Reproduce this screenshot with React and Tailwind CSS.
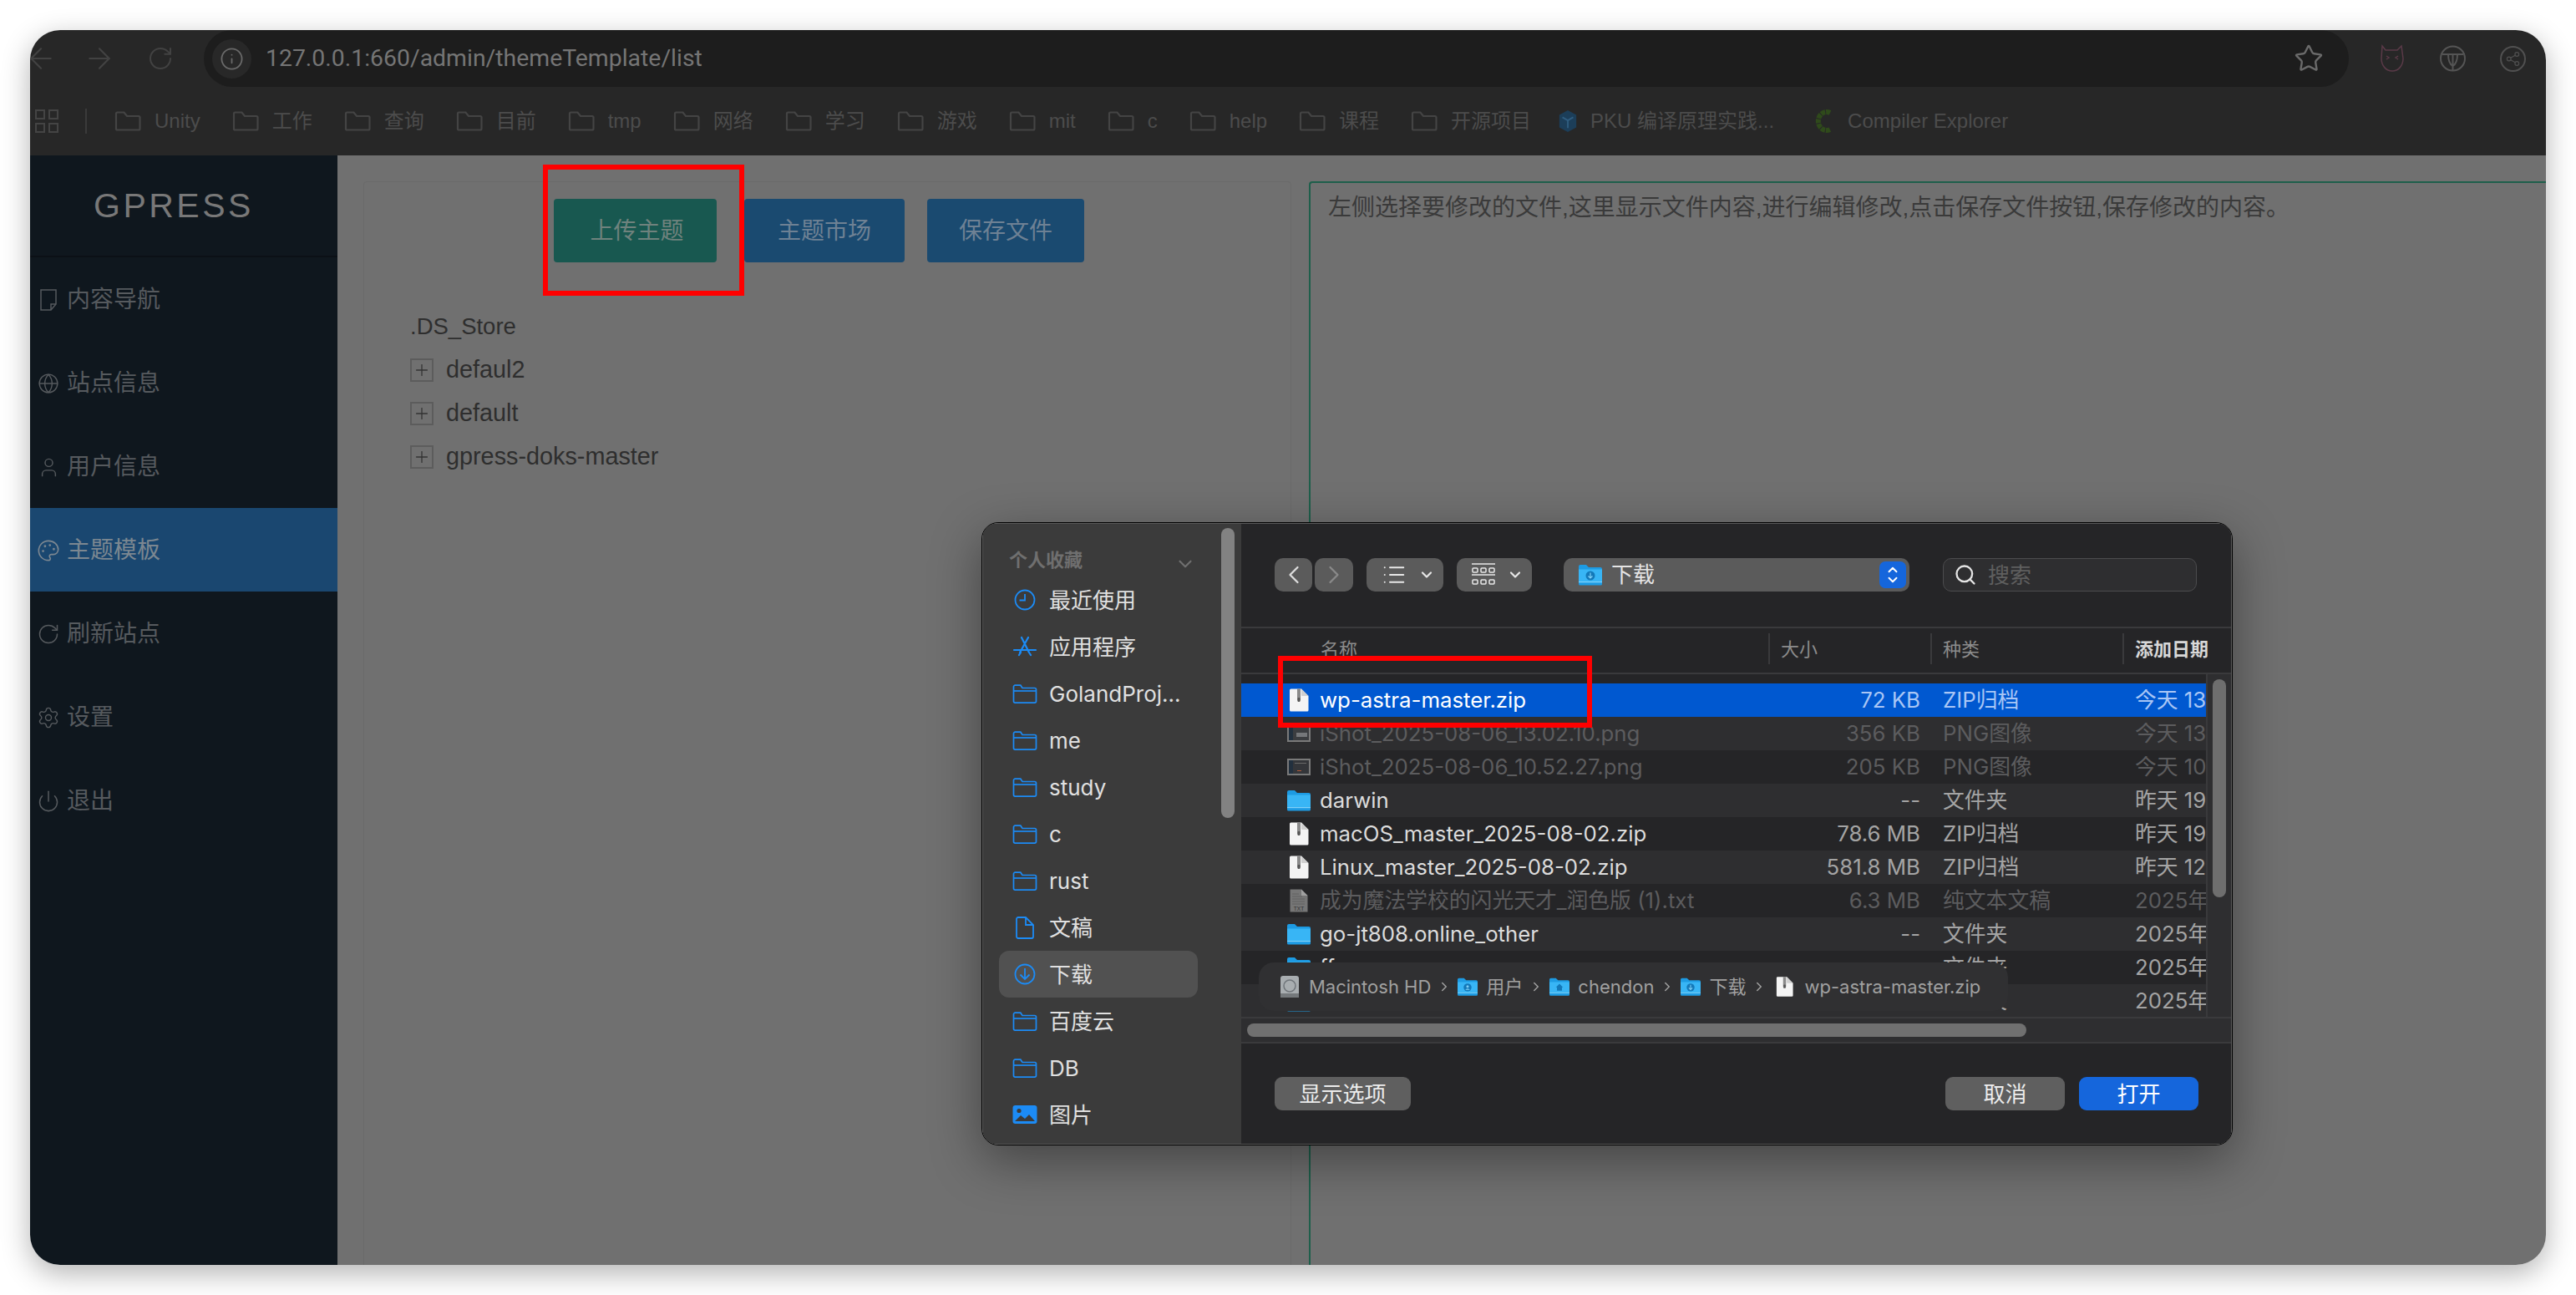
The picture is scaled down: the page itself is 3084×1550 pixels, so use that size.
import {
  ArrowLeft,
  ArrowRight,
  RotateCw,
  Info,
  Star,
  Share2,
  Globe,
  User,
  Palette,
  Settings,
  Power,
  Plus,
  Search,
  ChevronLeft,
  ChevronRight,
  ChevronDown,
  ChevronUp,
  List,
} from "lucide-react";

const PAGE_FONT = "font-['Liberation_Sans','Noto_Sans_CJK_SC',sans-serif]";

const BookmarkFolder = () => (
  <svg width="32" height="24" viewBox="0 0 32 24" fill="none" stroke="#444444" strokeWidth="2.2" className="shrink-0">
    <path d="M2 22V3a1.5 1.5 0 0 1 1.5-1.5h8L15 6h14a1.5 1.5 0 0 1 1.5 1.5V21a1.5 1.5 0 0 1-1.5 1.5H3.5A1.5 1.5 0 0 1 2 21z" />
  </svg>
);

const SideFolder = () => (
  <svg width="30" height="23" viewBox="0 0 30 23" fill="none" stroke="#1c8bf5" strokeWidth="1.7">
    <path d="M1.5 4.5V3a1.8 1.8 0 0 1 1.8-1.8h6.5L12 4.5h14.7a1.8 1.8 0 0 1 1.8 1.8v14a1.8 1.8 0 0 1-1.8 1.8H3.3a1.8 1.8 0 0 1-1.8-1.8z" />
    <path d="M1.5 8h27" />
  </svg>
);

const sideIcons = {
  clock: (
    <svg width="28" height="26" viewBox="0 0 28 26" fill="none" stroke="#1c8bf5" strokeWidth="1.8">
      <circle cx="14" cy="13" r="11.5" />
      <path d="M14 6v7.5H7.5" />
    </svg>
  ),
  apps: (
    <svg width="30" height="26" viewBox="0 0 30 26" fill="none" stroke="#1c8bf5" strokeWidth="2.2" strokeLinecap="round">
      <path d="M11 2l9 18M19 2L9 20M2 17h26M8 23l2-3M22 23l-2-3" />
    </svg>
  ),
  folder: <SideFolder />,
  doc: (
    <svg width="24" height="27" viewBox="0 0 24 27" fill="none" stroke="#1c8bf5" strokeWidth="1.8">
      <path d="M2 3a2 2 0 0 1 2-2h9l9 9v14a2 2 0 0 1-2 2H4a2 2 0 0 1-2-2z" />
      <path d="M13 1v9h9" />
    </svg>
  ),
  download: (
    <svg width="28" height="26" viewBox="0 0 28 26" fill="none" stroke="#1c8bf5" strokeWidth="1.8">
      <circle cx="14" cy="13" r="11.5" />
      <path d="M14 6v13M8.5 13.5l5.5 5.5 5.5-5.5" />
    </svg>
  ),
  picture: (
    <svg width="30" height="24" viewBox="0 0 30 24">
      <rect x="0.5" y="1" width="29" height="22" rx="3" fill="#1c8bf5" />
      <circle cx="8" cy="7.5" r="2.6" fill="#3b3b3b" />
      <path d="M3 20l7-7 5 4 5-5 7 8z" fill="#3b3b3b" />
    </svg>
  ),
};

const ZipIcon = ({ small }) => (
  <svg width={small ? 21 : 24} height={small ? 26 : 28} viewBox="0 0 24 28">
    <path d="M1 2a1.5 1.5 0 0 1 1.5-1.5H15L23.5 9v17a1.5 1.5 0 0 1-1.5 1.5H2.500A1.500 1.500 0 0 1 1 26z" fill="#f4f4f4" />
    <path d="M15 0.500L23.500 9H16a1 1 0 0 1-1-1z" fill="#cfcfcf" />
    <rect x="10" y="0.500" width="4" height="14" fill="#8a8a8a" />
    <rect x="10.500" y="11" width="3" height="5" rx="1" fill="#555555" />
  </svg>
);

const FolderIcon = ({ w = 28, h = 26, glyph }) => (
  <svg width={w} height={h} viewBox="0 0 28 26">
    <path d="M0 3a2 2 0 0 1 2-2h7l3 3h14a2 2 0 0 1 2 2v18a1.500 1.500 0 0 1-1.500 1.500h-25A1.500 1.500 0 0 1 0 24z" fill="#1d9be3" />
    <path d="M0 6.500h28V21H0z" fill="#38b5f5" />
    <path d="M0 21h28v1.200H0z" fill="#7fd0f7" />
    {glyph === "down" && (
      <g>
        <circle cx="14" cy="14" r="5.500" fill="#1378b8" />
        <path d="M14 10.500v6M11.500 14.500l2.500 2.500 2.500-2.500" stroke="#7fd0f7" strokeWidth="1.200" fill="none" />
      </g>
    )}
    {glyph === "user" && (
      <g fill="#1378b8">
        <circle cx="14" cy="14" r="5.500" />
        <circle cx="14" cy="12.800" r="1.800" fill="#7fd0f7" />
        <path d="M10.800 17.500a3.500 3 0 0 1 6.400 0z" fill="#7fd0f7" />
      </g>
    )}
    {glyph === "home" && <path d="M14 9l5 5h-1.500v4.500h-7V14H9z" fill="#1378b8" />}
  </svg>
);

const ShotIcon = ({ variant }) => (
  <svg width="28" height="20" viewBox="0 0 28 20">
    <rect width="28" height="20" fill="#7a7a7a" />
    <rect x="2" y="2" width="24" height="16" fill={variant === 1 ? "#3b3d40" : "#34363a"} />
    <rect x="2" y="2" width="5" height="16" fill="#22303e" />
    {variant === 1 ? (
      <rect x="11" y="9" width="13" height="5" fill="#75777a" />
    ) : (
      <g>
        <rect x="9" y="5" width="14" height="1" fill="#6a6a6a" />
        <rect x="12" y="14" width="5" height="1" fill="#b05a3a" />
      </g>
    )}
  </svg>
);

const TxtIcon = () => (
  <svg width="22" height="28" viewBox="0 0 22 28">
    <path d="M0.500 0.500H14L21.500 8V27.500H0.500z" fill="#767676" />
    <path d="M14 0.500L21.500 8H14z" fill="#a0a0a0" />
    <path d="M3 6h8M3 9h12M3 12h15M3 15h15M3 18h15" stroke="#606060" strokeWidth="1" />
    <text x="11" y="25.500" textAnchor="middle" fontSize="6.500" fill="#2f2f2f" fontFamily="Liberation Sans">TXT</text>
  </svg>
);

const bookmarks = ["Unity", "工作", "查询", "目前", "tmp", "网络", "学习", "游戏", "mit", "c", "help", "课程", "开源项目"];

const navItems = [
  {
    label: "内容导航",
    icon: (
      <svg width="24" height="30" viewBox="0 0 24 30" fill="none" stroke="currentColor" strokeWidth="1.500">
        <path d="M3 3h18v17l-6 7H3z" />
        <path d="M21 20h-6v7" />
      </svg>
    ),
  },
  { label: "站点信息", icon: <Globe size={26} strokeWidth={1.3} /> },
  { label: "用户信息", icon: <User size={27} strokeWidth={1.3} /> },
  { label: "主题模板", icon: <Palette size={28} strokeWidth={1.4} />, active: true },
  { label: "刷新站点", icon: <RotateCw size={28} strokeWidth={1.3} /> },
  { label: "设置", icon: <Settings size={28} strokeWidth={1.2} /> },
  { label: "退出", icon: <Power size={28} strokeWidth={1.3} /> },
];

const favorites = [
  { label: "最近使用", icon: "clock" },
  { label: "应用程序", icon: "apps" },
  { label: "GolandProj...", icon: "folder" },
  { label: "me", icon: "folder" },
  { label: "study", icon: "folder" },
  { label: "c", icon: "folder" },
  { label: "rust", icon: "folder" },
  { label: "文稿", icon: "doc" },
  { label: "下载", icon: "download", active: true },
  { label: "百度云", icon: "folder" },
  { label: "DB", icon: "folder" },
  { label: "图片", icon: "picture" },
];

const files = [
  { name: "wp-astra-master.zip", size: "72 KB", kind: "ZIP归档", date: "今天 13:02", icon: <ZipIcon />, selected: true },
  { name: "iShot_2025-08-06_13.02.10.png", size: "356 KB", kind: "PNG图像", date: "今天 13:02", icon: <ShotIcon variant={1} />, dim: true },
  { name: "iShot_2025-08-06_10.52.27.png", size: "205 KB", kind: "PNG图像", date: "今天 10:52", icon: <ShotIcon variant={2} />, dim: true },
  { name: "darwin", size: "--", kind: "文件夹", date: "昨天 19:20", icon: <FolderIcon /> },
  { name: "macOS_master_2025-08-02.zip", size: "78.6 MB", kind: "ZIP归档", date: "昨天 19:11", icon: <ZipIcon /> },
  { name: "Linux_master_2025-08-02.zip", size: "581.8 MB", kind: "ZIP归档", date: "昨天 12:40", icon: <ZipIcon /> },
  { name: "成为魔法学校的闪光天才_润色版 (1).txt", size: "6.3 MB", kind: "纯文本文稿", date: "2025年8月1日", icon: <TxtIcon />, dim: true },
  { name: "go-jt808.online_other", size: "--", kind: "文件夹", date: "2025年7月30日", icon: <FolderIcon /> },
  { name: "ff", size: "--", kind: "文件夹", date: "2025年7月28日", icon: <FolderIcon /> },
  { name: "数据库", size: "--", kind: "文件夹", date: "2025年7月26日", icon: <FolderIcon /> },
];

const TopBar = () => (
  <div className="flex h-[68px] items-center bg-[#272727] text-[#424242]">
    <ArrowLeft size={40} strokeWidth={1.3} className="ml-[-7px] shrink-0" />
    <ArrowRight size={40} strokeWidth={1.3} className="ml-[30px] shrink-0" />
    <RotateCw size={32} strokeWidth={1.5} className="ml-[37px] shrink-0" />
    <div className="ml-[36px] flex h-[68px] w-[2568px] items-center rounded-full bg-[#1d1d1d] pl-[10px] pr-[30px]">
      <div className="flex h-[47px] w-[47px] items-center justify-center rounded-full bg-[#282828] text-[#6a6a6a]">
        <Info size={29} strokeWidth={1.5} />
      </div>
      <span className="ml-[17px] font-['Roboto',sans-serif] text-[28.4px] text-[#757575]">127.0.0.1:660/admin/themeTemplate/list</span>
      <Star size={36} strokeWidth={1.6} className="ml-auto text-[#6a6a6a]" />
    </div>
    <svg width="30" height="34" viewBox="0 0 30 34" fill="none" stroke="#5a3a48" strokeWidth="1.500" className="ml-[37px] shrink-0">
      <path d="M3 2l4 5h14l5-5 2 15c0 9-6 15-13 15S2 26 2 17z" />
      <path d="M8 14l3 2-3 2M22 14l-3 2 3 2" />
    </svg>
    <svg width="31" height="32" viewBox="0 0 31 32" fill="none" stroke="#555555" strokeWidth="2" className="ml-[42px] shrink-0">
      <circle cx="15.500" cy="16" r="14.500" />
      <path d="M3 11h25M15.500 11v20M10 11c0 8 2 12 5.500 14M21 11c0 8-2 12-5.500 14" />
    </svg>
    <div className="relative ml-[41px] flex h-[31px] w-[31px] shrink-0 items-center justify-center rounded-full border-2 border-[#505050] text-[#505050]">
      <Share2 size={19} strokeWidth={1.5} />
    </div>
  </div>
);

const BookmarkBar = () => (
  <div className="flex h-[82px] items-center bg-[#272727] pl-[6px] text-[24px] text-[#4c4c4c]">
    <div className="grid grid-cols-2 gap-[4px]">
      {[0, 1, 2, 3].map((i) => (
        <div key={i} className="h-[12px] w-[12px] border-2 border-[#444444]" />
      ))}
    </div>
    <div className="ml-[32px] mr-[33px] h-[30px] w-[2px] bg-[#3a3a3a]" />
    <div className="flex items-center gap-[38px]">
      {bookmarks.map((b) => (
        <div key={b} className="flex items-center gap-[16px]">
          <BookmarkFolder />
          <span>{b}</span>
        </div>
      ))}
      <div className="ml-[-6px] flex items-center gap-[15px]">
        <svg width="24" height="30" viewBox="0 0 26 30" className="shrink-0">
          <path d="M13 1l11 6v16l-11 6-11-6V7z" fill="#1c3e59" />
          <path d="M6 10l7 4 7-4M13 14v10" stroke="#2f5d80" strokeWidth="2" fill="none" />
        </svg>
        <span>PKU 编译原理实践...</span>
      </div>
      <div className="ml-[9px] flex items-center gap-[17px]">
        <svg width="24" height="32" viewBox="0 0 24 32" fill="none" className="shrink-0">
          <path d="M20 6a10 11 0 1 0 0 20" stroke="#2f4a1b" strokeWidth="6" strokeDasharray="5 1" />
        </svg>
        <span>Compiler Explorer</span>
      </div>
    </div>
  </div>
);

const Sidebar = () => (
  <div className="w-[368px] shrink-0 bg-[#0f171e]">
    <div className="flex h-[122px] items-center border-b-2 border-[#0b1016] pl-[76px] pt-[1px] text-[41px] tracking-[3.500px] text-[#787878]">GPRESS</div>
    {navItems.map((item) => (
      <div
        key={item.label}
        className={
          item.active
            ? "flex h-[100px] items-center gap-[8px] bg-[#1a4770] pl-[8px] pt-[2px] text-[28px] text-[#7c8791]"
            : "flex h-[100px] items-center gap-[8px] pl-[8px] pt-[2px] text-[28px] text-[#565a5e]"
        }
      >
        <div className="flex w-[28px] justify-center">{item.icon}</div>
        <span>{item.label}</span>
      </div>
    ))}
  </div>
);

const MainArea = () => (
  <div className="flex min-w-0 flex-1 bg-[#707070] pl-[31px] pt-[31px]">
    <div className="h-[1400px] w-[1111px] shrink-0 rounded-[4px] border border-[#6a6a6a]">
      <div className="ml-[227px] mt-[20px] flex text-[28px]">
        <button className="h-[76px] w-[195px] rounded-[4px] bg-[#185850] pl-[4px] pt-[2px] text-[#6f827d]">上传主题</button>
        <button className="ml-[33px] h-[76px] w-[192px] rounded-[4px] bg-[#1a4a70] pt-[2px] text-[#6e8194]">主题市场</button>
        <button className="ml-[27px] h-[76px] w-[188px] rounded-[4px] bg-[#1a4a70] pt-[2px] text-[#6e8194]">保存文件</button>
      </div>
      <div className="ml-[55px] mt-[51px] text-[28.800px] text-[#2e2e2e]">
        <div className="flex h-[52px] items-center text-[27.500px]">.DS_Store</div>
        {["defaul2", "default", "gpress-doks-master"].map((dir) => (
          <div key={dir} className="flex h-[52px] items-center">
            <div className="flex h-[28px] w-[28px] items-center justify-center border-2 border-[#5c5c5c] text-[#333333]">
              <Plus size={22} strokeWidth={1.4} />
            </div>
            <span className="ml-[15px]">{dir}</span>
          </div>
        ))}
      </div>
    </div>
    <div className="ml-[21px] flex-1 rounded-tl-[4px] border-l-2 border-t-2 border-[#1e5f4b] pl-[21px] pt-[12px] text-[28px] leading-[36px] text-[#3a3a3a]">
      左侧选择要修改的文件,这里显示文件内容,进行编辑修改,点击保存文件按钮,保存修改的内容。
    </div>
  </div>
);

const ToolButton = ({ className, children }) => (
  <div className={`flex h-[40px] items-center rounded-[10px] bg-[#5b5b5b] ${className}`}>{children}</div>
);

const DialogSidebar = () => (
  <div className="relative w-[309px] shrink-0 bg-[#3b3b3b] text-[26px] text-[#e0e0e0]">
    <div className="flex h-[63px] items-end justify-between pb-[3px] pl-[31px] pr-[54px] text-[22px] font-bold text-[#6f6f6f]">
      <span>个人收藏</span>
      <ChevronDown size={26} strokeWidth={2} className="mb-[-1px] text-[#6f6f6f]" />
    </div>
    {favorites.map((f) => (
      <div
        key={f.label}
        className={
          f.active
            ? "ml-[19px] mr-[52px] flex h-[56px] items-center gap-[11px] rounded-[12px] bg-[#515151] pl-[13px]"
            : "ml-[19px] mr-[52px] flex h-[56px] items-center gap-[11px] pl-[13px]"
        }
      >
        <div className="flex w-[36px] justify-center">{sideIcons[f.icon]}</div>
        <span className="whitespace-nowrap">{f.label}</span>
      </div>
    ))}
    <div className="absolute right-[8px] top-[5px] h-[347px] w-[16px] rounded-full bg-[#828282]" />
  </div>
);

const FileRow = ({ file, index }) => {
  let rowBg = index % 2 === 1 ? "bg-[#2e2e30]" : "bg-[#252527]";
  let nameColor = "text-[#dcdcdc]";
  let metaColor = "text-[#a4a4a4]";
  if (file.dim) {
    nameColor = "text-[#5c5c5e]";
    metaColor = "text-[#5c5c5e]";
  }
  if (file.selected) {
    rowBg = "bg-[#0058d0]";
    nameColor = "text-white";
    metaColor = "text-[#a9c6f5]";
  }
  return (
    <div className={`flex h-[40px] items-center whitespace-nowrap ${rowBg}`}>
      <div className="flex w-[813px] items-center pl-[54px]">
        <div className="flex w-[30px] justify-center">{file.icon}</div>
        <span className={`ml-[10px] ${nameColor}`}>{file.name}</span>
        <span className={`ml-auto ${metaColor}`}>{file.size}</span>
      </div>
      <div className={`w-[257px] pl-[27px] ${metaColor}`}>{file.kind}</div>
      <div className={`w-[87px] overflow-hidden ${metaColor}`}>{file.date}</div>
    </div>
  );
};

const FilePane = () => (
  <div className="relative flex min-w-0 flex-1 flex-col bg-[#252527]">
    <div className="flex h-[125px] shrink-0 items-start border-b-2 border-[#3a3a3c] pl-[40px] pt-[41px]">
      <ToolButton className="w-[45px] justify-center text-[#dedede]"><ChevronLeft size={36} strokeWidth={1.5} /></ToolButton>
      <ToolButton className="ml-[3px] w-[46px] justify-center text-[#8a8a8a]"><ChevronRight size={36} strokeWidth={1.5} /></ToolButton>
      <ToolButton className="ml-[16px] w-[92px] justify-between pl-[18px] pr-[10px] text-[#e8e8e8]">
        <List size={30} strokeWidth={1.6} />
        <ChevronDown size={20} strokeWidth={2.6} />
      </ToolButton>
      <ToolButton className="ml-[16px] w-[90px] justify-between pl-[17px] pr-[10px] text-[#e8e8e8]">
        <svg width="30" height="28" viewBox="0 0 30 28" fill="none" stroke="currentColor" strokeWidth="1.500">
          <path d="M1 1h28M1 14h28" />
          <rect x="2" y="6" width="6" height="5" rx="1" />
          <rect x="12" y="6" width="6" height="5" rx="1" />
          <rect x="22" y="6" width="6" height="5" rx="1" />
          <rect x="2" y="20" width="6" height="5" rx="1" />
          <rect x="12" y="20" width="6" height="5" rx="1" />
          <rect x="22" y="20" width="6" height="5" rx="1" />
        </svg>
        <ChevronDown size={20} strokeWidth={2.6} />
      </ToolButton>
      <ToolButton className="ml-[38px] w-[414px] pl-[18px] text-[26px] text-[#e4e4e4]">
        <FolderIcon glyph="down" />
        <span className="ml-[11px] mt-[-2px]">下载</span>
        <div className="ml-auto mr-[4px] flex h-[32px] w-[32px] flex-col items-center justify-center rounded-[7px] bg-[#1566dc] text-white">
          <ChevronUp size={18} strokeWidth={2.6} className="mb-[-3px]" />
          <ChevronDown size={18} strokeWidth={2.6} className="mt-[-3px]" />
        </div>
      </ToolButton>
      <div className="ml-[40px] flex h-[40px] w-[304px] items-center rounded-[10px] border border-[#4c4c4e] bg-[#2e2e30] pl-[12px] text-[26px] text-[#5f5f5f]">
        <Search size={28} strokeWidth={2} className="text-[#e4e4e4]" />
        <span className="ml-[13px]">搜索</span>
      </div>
    </div>
    <div className="relative h-[465px] shrink-0 overflow-hidden text-[25.800px] leading-none">
      <div className="flex h-[55px] items-center border-b-2 border-[#3a3a3c] pb-[4px] text-[22px] text-[#8c8c8c]">
        <div className="flex w-[631px] pl-[95px]">名称</div>
        <div className="flex h-[37px] w-[194px] items-center border-l-2 border-[#3a3a3c] pl-[13px]">大小</div>
        <div className="flex h-[37px] w-[230px] items-center border-l-2 border-[#3a3a3c] pl-[13px]">种类</div>
        <div className="flex h-[37px] items-center border-l-2 border-[#3a3a3c] pl-[13px] font-bold text-[#d8d8d8]">添加日期</div>
      </div>
      <div className="h-[11px]" />
      <div className="flex">
        <div className="w-[1157px] shrink-0">
          {files.map((file, i) => (
            <FileRow key={file.name} file={file} index={i} />
          ))}
        </div>
      </div>
      <div className="absolute bottom-0 right-0 top-[55px] w-[30px] border-l-2 border-[#3a3a3c] bg-[#2e2e30]">
        <div className="ml-[6px] mt-[6px] h-[261px] w-[16px] rounded-full bg-[#6e6e6e]" />
      </div>
    </div>
    <div className="flex h-[32px] shrink-0 items-center border-y-2 border-[#3a3a3c] bg-[#2e2e30] pl-[7px]">
      <div className="h-[16px] w-[933px] rounded-full bg-[#707070]" />
    </div>
    <div className="flex flex-1 items-start justify-between pl-[40px] pr-[39px] pt-[40px] text-[26px] text-[#ececec]">
      <button className="h-[40px] w-[163px] rounded-[9px] bg-[#5f5f5f]">显示选项</button>
      <div className="flex gap-[17px]">
        <button className="h-[40px] w-[143px] rounded-[9px] bg-[#5f5f5f]">取消</button>
        <button className="h-[40px] w-[143px] rounded-[9px] bg-[#1566dc] text-white">打开</button>
      </div>
    </div>
    {/* path tooltip sits over the list */}
    <div className="absolute left-[21px] top-[525px] flex h-[58px] w-[897px] items-center rounded-[18px] bg-[#303032] pl-[25px] text-[22px] whitespace-nowrap text-[#a0a0a0]">
      <svg width="24" height="28" viewBox="0 0 24 28" className="shrink-0">
        <rect x="1" y="1" width="22" height="26" rx="3" fill="#a8adb0" />
        <rect x="1" y="22" width="22" height="5" fill="#75797c" />
        <circle cx="12" cy="13" r="7" fill="none" stroke="#70757a" strokeWidth="1.500" />
      </svg>
      <span className="ml-[11px]">Macintosh HD</span>
      <ChevronRight size={18} strokeWidth={2} className="ml-[7px]" />
      <div className="ml-[7px]"><FolderIcon w={24} h={26} glyph="user" /></div>
      <span className="ml-[10px]">用户</span>
      <ChevronRight size={18} strokeWidth={2} className="ml-[7px]" />
      <div className="ml-[7px]"><FolderIcon w={24} h={26} glyph="home" /></div>
      <span className="ml-[10px]">chendon</span>
      <ChevronRight size={18} strokeWidth={2} className="ml-[7px]" />
      <div className="ml-[7px]"><FolderIcon w={24} h={26} glyph="down" /></div>
      <span className="ml-[10px]">下载</span>
      <ChevronRight size={18} strokeWidth={2} className="ml-[7px]" />
      <div className="ml-[11px]"><ZipIcon small /></div>
      <span className="ml-[13px]">wp-astra-master.zip</span>
    </div>
  </div>
);

export default function App() {
  return (
    <div className={`relative h-[1550px] w-[3084px] overflow-hidden bg-white p-[36px] ${PAGE_FONT}`}>
      <div className="flex h-[1478px] w-[3012px] flex-col overflow-hidden rounded-[36px] shadow-[0_10px_34px_rgba(0,0,0,0.3)]">
        <TopBar />
        <BookmarkBar />
        <div className="flex min-h-0 flex-1">
          <Sidebar />
          <MainArea />
        </div>
      </div>

      {/* file picker */}
      <div className="absolute left-[1175px] top-[625px] h-[746px] w-[1498px] overflow-hidden rounded-[20px] border border-black font-['Inter','Noto_Sans_CJK_SC',sans-serif] shadow-[0_18px_60px_rgba(0,0,0,0.4)]">
        <div className="flex h-full rounded-[19px] border border-[#5a5a5a]">
          <DialogSidebar />
          <FilePane />
        </div>
      </div>

      {/* annotation boxes */}
      <div className="absolute left-[650px] top-[197px] h-[157px] w-[241px] border-[6px] border-[#ff0000]" />
      <div className="absolute left-[1530px] top-[785px] h-[86px] w-[376px] border-[6px] border-[#ff0000]" />
    </div>
  );
}
